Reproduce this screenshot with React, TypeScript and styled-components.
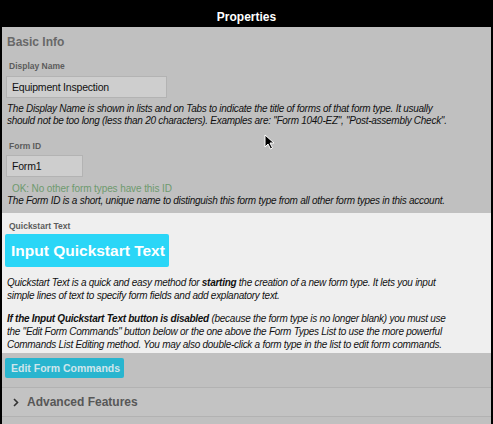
import React from "react";
import styled, { createGlobalStyle } from "styled-components";

const Global = createGlobalStyle`
  html, body { margin: 0; padding: 0; background: #000; }
  body { font-family: "Liberation Sans", Arial, Helvetica, sans-serif; }
  * { box-sizing: border-box; }
`;

const Frame = styled.div`
  width: 493px;
  height: 424px;
  background: #000;
  display: flex;
  flex-direction: column;
  position: relative;
  overflow: hidden;
`;

const Header = styled.div`
  flex: 0 0 27px;
  height: 27px;
  padding-top: 10px;
  text-align: center;
  color: #fff;
  font-weight: bold;
  font-size: 12px;
  line-height: 14px;
`;

const Body = styled.div`
  flex: 1;
  min-height: 0;
  overflow: hidden;
  margin: 0 2px;
  background: #c0c0c0;
  display: flex;
  flex-direction: column;
`;

const Section = styled.div<{ $light?: boolean; $pad: string }>`
  background: ${(p) => (p.$light ? "#efefef" : "#c0c0c0")};
  padding: ${(p) => p.$pad};
`;

const SectionTitle = styled.div`
  font-size: 12px;
  font-weight: bold;
  color: #686868;
  line-height: 15px;
  padding-left: 5px;
`;

const Label = styled.div<{ $mt?: number }>`
  font-size: 8.5px;
  font-weight: bold;
  color: #5c5c5c;
  line-height: 11px;
  padding-left: 7px;
  margin-top: ${(p) => p.$mt ?? 0}px;
`;

const Field = styled.div<{ $w: number; $mt?: number }>`
  width: ${(p) => p.$w}px;
  height: 22px;
  margin: ${(p) => p.$mt ?? 0}px 0 0 4px;
  background: #cecece;
  border: 1px solid #b3b3b3;
  font-size: 10.5px;
  letter-spacing: -0.2px;
  line-height: 20px;
  color: #111;
  padding-left: 5px;
`;

const Help = styled.p<{ $lh?: number; $mt?: number }>`
  margin: ${(p) => p.$mt ?? 0}px 0 0 0;
  padding: 0 4px 0 5px;
  font-size: 10px;
  letter-spacing: -0.27px;
  font-style: italic;
  line-height: ${(p) => p.$lh ?? 12}px;
  color: #111;
`;

const Ok = styled.div`
  font-size: 10px;
  letter-spacing: -0.1px;
  line-height: 13px;
  color: #6e9a6e;
  padding-left: 10px;
  margin-top: 5px;
`;

const BigButton = styled.button`
  display: block;
  margin: 0 0 0 3px;
  width: 164px;
  height: 33px;
  border: none;
  border-radius: 2px;
  background: #2ad6f7;
  color: #fff;
  font-family: inherit;
  font-weight: bold;
  font-size: 15.5px;
  white-space: nowrap;
  padding: 0 0 0 6px;
  text-align: left;
`;

const SmallButton = styled.button`
  display: block;
  margin: 0 0 0 3px;
  width: 119px;
  height: 20px;
  border: none;
  border-radius: 2px;
  background: #29b5cf;
  color: #cfe6ec;
  font-family: inherit;
  font-weight: bold;
  font-size: 10.5px;
  white-space: nowrap;
  padding: 0 0 0 6px;
  text-align: left;
`;

const Accordion = styled.div`
  border-top: 1px solid #b2b2b2;
  border-bottom: 1px solid #b2b2b2;
  height: 30px;
  display: flex;
  align-items: center;
  gap: 8px;
  padding-left: 11px;
  background: #c3c3c3;
  margin-top: 9px;
`;

const AccText = styled.span`
  font-size: 12px;
  font-weight: bold;
  color: #575757;
`;

const Spacer = styled.div<{ $h: number }>`
  height: ${(p) => p.$h}px;
`;

const Cursor = styled.svg`
  position: absolute;
  left: 264px;
  top: 134px;
`;

export default function App() {
  return (
    <>
      <Global />
      <Frame>
        <Header>Properties</Header>
        <Body>
          <Section $pad="8px 0 0 0">
            <SectionTitle>Basic Info</SectionTitle>
            <Label $mt={11}>Display Name</Label>
            <Field $w={161} $mt={4}>Equipment Inspection</Field>
            <Help $mt={5}>
              The Display Name is shown in lists and on Tabs to indicate the title of forms of that form type. It usually
              <br />
              should not be too long (less than 20 characters). Examples are: "Form 1040-EZ", "Post-assembly Check".
            </Help>
            <Label $mt={14}>Form ID</Label>
            <Field $w={77} $mt={3}>Form1</Field>
            <Ok>OK: No other form types have this ID</Ok>
            <Help $mt={0} style={{ paddingBottom: 6 }}>
              The Form ID is a short, unique name to distinguish this form type from all other form types in this account.
            </Help>
          </Section>
          <Section $light $pad="8px 0 2px 0">
            <Label>Quickstart Text</Label>
            <Spacer $h={2} />
            <BigButton>Input Quickstart Text</BigButton>
            <Help $lh={13} $mt={9}>
              Quickstart Text is a quick and easy method for <b>starting</b> the creation of a new form type. It lets you input
              <br />
              simple lines of text to specify form fields and add explanatory text.
            </Help>
            <Help $lh={13} $mt={10}>
              <b>If the Input Quickstart Text button is disabled</b> (because the form type is no longer blank) you must use
              <br />
              the "Edit Form Commands" button below or the one above the Form Types List to use the more powerful
              <br />
              Commands List Editing method. You may also double-click a form type in the list to edit form commands.
            </Help>
          </Section>
          <Section $pad="5px 0 0 0">
            <SmallButton>Edit Form Commands</SmallButton>
            <Accordion>
              <svg width="6" height="9" viewBox="0 0 6 9">
                <polyline points="1,1 4.5,4.5 1,8" fill="none" stroke="#333" strokeWidth="1.6" />
              </svg>
              <AccText>Advanced Features</AccText>
            </Accordion>
          </Section>
        </Body>
        <Cursor width="11" height="16" viewBox="0 0 11 16">
          <path d="M1 1 L1 13 L4 10 L6.5 15 L8.5 14 L6 9 L10 9 Z" fill="#000" stroke="#fff" strokeWidth="1" />
        </Cursor>
      </Frame>
    </>
  );
}
